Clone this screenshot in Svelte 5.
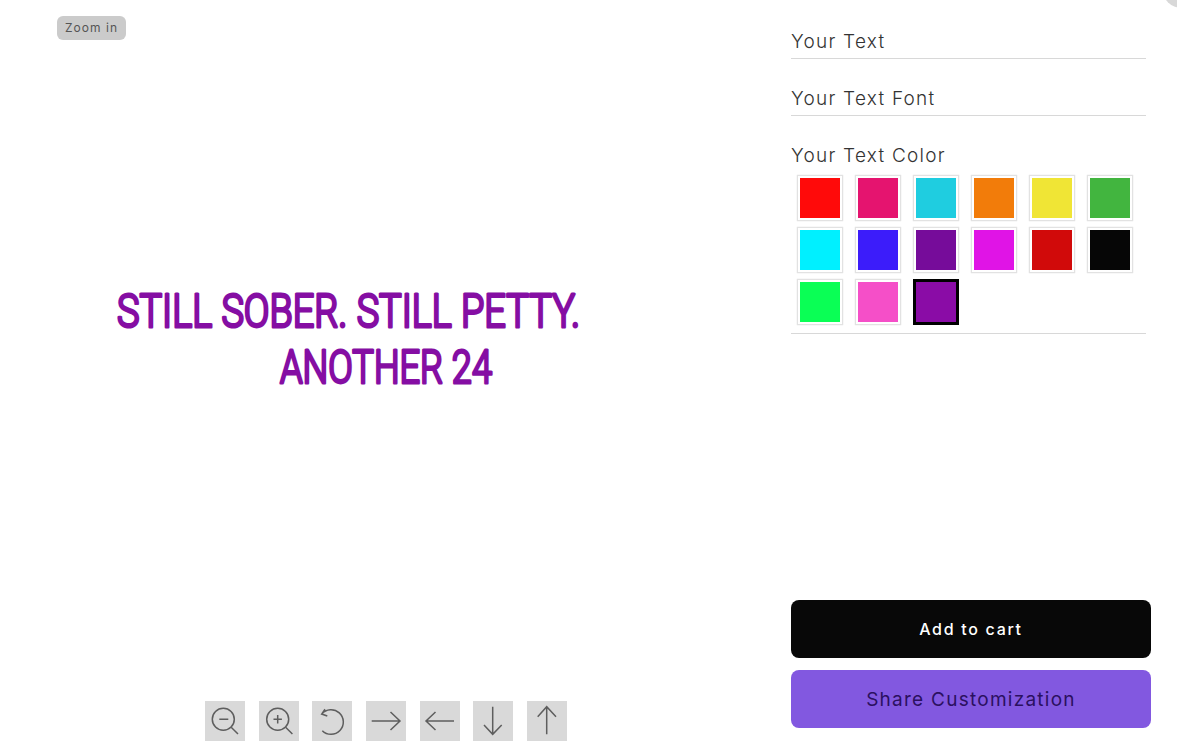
<script lang="ts">
    const swatches = [
        '#ff0a0a', '#e5146f', '#1fcde0', '#f27c0a', '#f0e535', '#42b53f',
        '#00f0ff', '#3c1cfa', '#760c9a', '#e014e6', '#d10a0a', '#060606',
        '#0aff55', '#f54fc8', '#8a0ca6'
    ];
    const selected = 14;
</script>

<div class="page">
    <section class="preview">
        <span class="zoom-badge">Zoom in</span>
        <svg class="canvas" viewBox="0 0 791 696">
            <text class="design" x="117" y="326.500" textLength="463" lengthAdjust="spacingAndGlyphs">STILL SOBER. STILL PETTY.</text>
            <text class="design" x="280" y="382.500" textLength="212" lengthAdjust="spacingAndGlyphs">ANOTHER 24</text>
        </svg>
        <div class="controls">
            <button class="ctl" aria-label="Zoom out">
                <svg viewBox="0 0 40 40"><circle cx="18.3" cy="18.3" r="11" /><path d="M26.2 26.2 33 33M14.3 18.3h9" /></svg>
            </button>
            <button class="ctl" aria-label="Zoom in">
                <svg viewBox="0 0 40 40"><circle cx="18.7" cy="18.3" r="11" /><path d="M26.6 26.2 33.4 33M14.5 18.3h8.4M18.7 14.1v8.4" /></svg>
            </button>
            <button class="ctl" aria-label="Rotate">
                <svg viewBox="0 0 40 40"><path d="M9.7 13A12.3 12.3 0 1 1 10.3 29.7M13 8.300 9.700 13l5.600 2" /></svg>
            </button>
            <button class="ctl" aria-label="Right">
                <svg viewBox="0 0 40 40"><path d="M5.700 20H34M24.500 11 34 20l-9.500 9" /></svg>
            </button>
            <button class="ctl" aria-label="Left">
                <svg viewBox="0 0 40 40"><path d="M34 20H6M15.500 11 6 20l9.500 9" /></svg>
            </button>
            <button class="ctl" aria-label="Down">
                <svg viewBox="0 0 40 40"><path d="M19.700 5.700V33.300M11 24l8.700 9.300L28.700 24" /></svg>
            </button>
            <button class="ctl" aria-label="Up">
                <svg viewBox="0 0 40 40"><path d="M19.700 33.300V5.700M10.700 15.700l9-10 9.300 10" /></svg>
            </button>
        </div>
    </section>

    <aside class="options">
        <span class="corner"></span>
        <div class="field"><span class="label">Your Text</span></div>
        <div class="field"><span class="label">Your Text Font</span></div>
        <div class="field colors">
            <span class="label">Your Text Color</span>
            <div class="swatches">
                {#each swatches as color, i}
                    <button class="swatch" class:selected={i === selected} aria-label={color}>
                        <span class="fill" style="background: {color}"></span>
                    </button>
                {/each}
            </div>
        </div>
        <div class="actions">
            <button class="action cart">Add to cart</button>
            <button class="action share">Share Customization</button>
        </div>
    </aside>
</div>

<style>
    :global(body) {
        background: #fff;
    }

    .page {
        display: flex;
        height: 746px;
        overflow: hidden;
        font-family: "Inter", "Noto Sans", sans-serif;
    }

    .preview {
        position: relative;
        width: 791px;
        flex-shrink: 0;
        display: flex;
        flex-direction: column;
    }

    .zoom-badge {
        position: absolute;
        left: 57px;
        top: 16px;
        padding: 0 8px;
        height: 24px;
        line-height: 24px;
        border-radius: 6px;
        background: #cbcbcb;
        color: #555;
        font-size: 12px;
        letter-spacing: 1.05px;
    }

    .canvas {
        display: block;
        width: 791px;
        height: 696px;
        flex-shrink: 0;
    }

    .design {
        font-family: "Roboto", "Noto Sans", sans-serif;
        font-size: 46px;
        font-weight: 300;
        fill: #850ea3;
        stroke: #850ea3;
        stroke-width: 3px;
        stroke-linejoin: round;
        stroke-linecap: round;
    }

    .controls {
        display: flex;
        gap: 13.67px;
        padding: 5px 0 5px 205px;
    }

    .ctl {
        width: 40px;
        height: 40px;
        padding: 0;
        border: none;
        background: #d9d9d9;
    }

    .ctl svg {
        display: block;
        width: 40px;
        height: 40px;
        fill: none;
        stroke: #5e5e5e;
        stroke-width: 1.5;
    }

    .options {
        position: relative;
        flex: 1;
        display: flex;
        flex-direction: column;
        padding-top: 28px;
    }

    .corner {
        position: absolute;
        right: -25px;
        top: -32px;
        width: 40px;
        height: 40px;
        border-radius: 50%;
        background: #d8d8d8;
    }

    .field {
        width: 355px;
        height: 30px;
        margin-bottom: 26px;
        border-bottom: 1px solid #d8d8d8;
    }

    .label {
        display: block;
        font-size: 19px;
        font-weight: 300;
        line-height: 28px;
        letter-spacing: 1.25px;
        color: #333;
    }

    .colors {
        height: 191px;
        margin-bottom: 0;
    }

    .swatches {
        display: grid;
        grid-template-columns: repeat(6, 46px);
        gap: 6px 12px;
        padding: 5px 0 0 6px;
    }

    .swatch {
        width: 46px;
        height: 46px;
        padding: 2px;
        background: #fff;
        border: 1px solid #e2e2e2;
        box-shadow: 0 0 1px #d4d4d4;
    }

    .swatch.selected {
        padding: 0;
        border: 3px solid #000;
        box-shadow: none;
    }

    .fill {
        display: block;
        width: 40px;
        height: 40px;
    }

    .actions {
        margin-top: auto;
        padding-bottom: 18px;
        display: flex;
        flex-direction: column;
        gap: 12px;
        width: 360px;
    }

    .action {
        height: 58px;
        border: none;
        border-radius: 8px;
        font-family: inherit;
    }

    .cart {
        background: #080808;
        color: #fff;
        font-size: 16px;
        font-weight: 500;
        letter-spacing: 1.7px;
    }

    .share {
        background: #8258e0;
        color: #2b1060;
        font-size: 19px;
        letter-spacing: 1.26px;
    }
</style>
